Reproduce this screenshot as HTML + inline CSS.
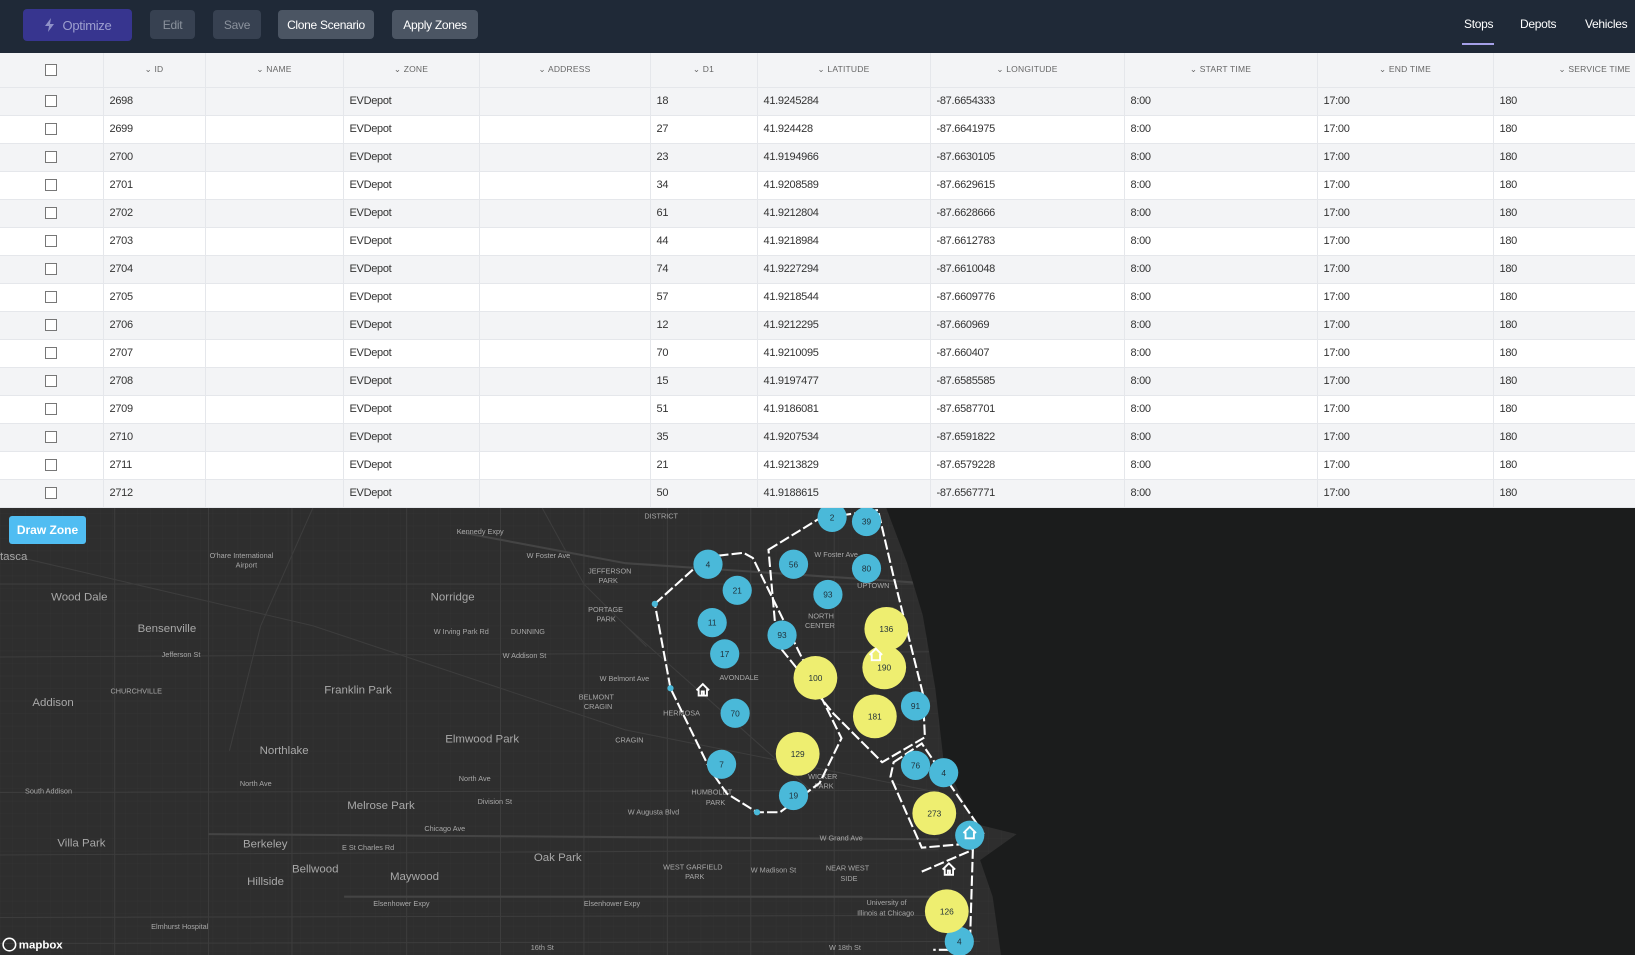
<!DOCTYPE html>
<html><head><meta charset="utf-8"><style>
*{box-sizing:border-box;margin:0;padding:0}
body{width:1635px;height:955px;overflow:hidden;font-family:"Liberation Sans",sans-serif;background:#fff;position:relative}
.hdr{position:absolute;left:0;top:0;width:1635px;height:53px;background:#1f2937}
.btn{position:absolute;top:10px;height:29px;border-radius:4px;font-size:12px;display:flex;align-items:center;justify-content:center;letter-spacing:-.3px}
.tab{position:absolute;top:17px;font-size:12px;color:#fff;letter-spacing:-.3px}
table{position:absolute;left:0;top:53px;border-collapse:collapse;table-layout:fixed;width:1635px}
td,th{height:28px;border-right:1px solid #e5e7eb;border-bottom:1px solid #e5e7eb;font-size:11px;color:#333;padding-left:6px;text-align:left;white-space:nowrap;overflow:hidden;letter-spacing:-.3px}
th{height:34px;background:#f3f4f6;font-weight:normal;font-size:8.5px;color:#666;text-align:center;letter-spacing:.2px;padding-left:0}
tr:nth-child(even) td{background:#f3f4f6}
td.c,th.c{text-align:center;padding:0}
.cb{display:inline-block;width:12px;height:12px;border:1px solid #777;background:#fff;vertical-align:middle}
.map{position:absolute;left:0;top:508px;width:1635px;height:447px;background:#2e2e2e;overflow:hidden}
.dz{position:absolute;left:9px;top:8px;width:77px;height:28px;background:#50bdf2;border-radius:3px;color:#fff;font-size:12px;font-weight:bold;display:flex;align-items:center;justify-content:center}
</style></head><body>
<div class="hdr">
<div class="btn" style="left:23px;width:109px;height:32px;top:9px;background:#37358f;color:#9d9fcf;font-size:13px">
<svg width="12" height="14" viewBox="0 0 12 14" style="margin-right:7px"><path d="M7 0L1 8h4l-1 6 6-8H6z" fill="#8f91c8"/></svg>Optimize</div>
<div class="btn" style="left:150px;width:45px;background:#374151;color:#8b929d">Edit</div>
<div class="btn" style="left:213px;width:48px;background:#374151;color:#8b929d">Save</div>
<div class="btn" style="left:278px;width:96px;background:#4b5563;color:#fff">Clone Scenario</div>
<div class="btn" style="left:392px;width:86px;background:#4b5563;color:#fff">Apply Zones</div>
<div class="tab" style="left:1464px">Stops</div>
<div style="position:absolute;left:1462px;top:43px;width:32px;height:2px;background:#a5a0e8"></div>
<div class="tab" style="left:1520px">Depots</div>
<div class="tab" style="left:1585px">Vehicles</div>
</div>
<table>
<colgroup><col style="width:103px"><col style="width:102px"><col style="width:138px"><col style="width:136px"><col style="width:171px"><col style="width:107px"><col style="width:173px"><col style="width:194px"><col style="width:193px"><col style="width:176px"><col style="width:142px"></colgroup>
<tr><th class="c"><span class="cb"></span></th><th>⌄ ID</th><th>⌄ NAME</th><th>⌄ ZONE</th><th>⌄ ADDRESS</th><th>⌄ D1</th><th>⌄ LATITUDE</th><th>⌄ LONGITUDE</th><th>⌄ START TIME</th><th>⌄ END TIME</th><th style="text-align:right;padding-right:4px">⌄ SERVICE TIME</th></tr>
<tr><td class="c"><span class="cb"></span></td><td>2698</td><td></td><td>EVDepot</td><td></td><td>18</td><td>41.9245284</td><td>-87.6654333</td><td>8:00</td><td>17:00</td><td>180</td></tr>
<tr><td class="c"><span class="cb"></span></td><td>2699</td><td></td><td>EVDepot</td><td></td><td>27</td><td>41.924428</td><td>-87.6641975</td><td>8:00</td><td>17:00</td><td>180</td></tr>
<tr><td class="c"><span class="cb"></span></td><td>2700</td><td></td><td>EVDepot</td><td></td><td>23</td><td>41.9194966</td><td>-87.6630105</td><td>8:00</td><td>17:00</td><td>180</td></tr>
<tr><td class="c"><span class="cb"></span></td><td>2701</td><td></td><td>EVDepot</td><td></td><td>34</td><td>41.9208589</td><td>-87.6629615</td><td>8:00</td><td>17:00</td><td>180</td></tr>
<tr><td class="c"><span class="cb"></span></td><td>2702</td><td></td><td>EVDepot</td><td></td><td>61</td><td>41.9212804</td><td>-87.6628666</td><td>8:00</td><td>17:00</td><td>180</td></tr>
<tr><td class="c"><span class="cb"></span></td><td>2703</td><td></td><td>EVDepot</td><td></td><td>44</td><td>41.9218984</td><td>-87.6612783</td><td>8:00</td><td>17:00</td><td>180</td></tr>
<tr><td class="c"><span class="cb"></span></td><td>2704</td><td></td><td>EVDepot</td><td></td><td>74</td><td>41.9227294</td><td>-87.6610048</td><td>8:00</td><td>17:00</td><td>180</td></tr>
<tr><td class="c"><span class="cb"></span></td><td>2705</td><td></td><td>EVDepot</td><td></td><td>57</td><td>41.9218544</td><td>-87.6609776</td><td>8:00</td><td>17:00</td><td>180</td></tr>
<tr><td class="c"><span class="cb"></span></td><td>2706</td><td></td><td>EVDepot</td><td></td><td>12</td><td>41.9212295</td><td>-87.660969</td><td>8:00</td><td>17:00</td><td>180</td></tr>
<tr><td class="c"><span class="cb"></span></td><td>2707</td><td></td><td>EVDepot</td><td></td><td>70</td><td>41.9210095</td><td>-87.660407</td><td>8:00</td><td>17:00</td><td>180</td></tr>
<tr><td class="c"><span class="cb"></span></td><td>2708</td><td></td><td>EVDepot</td><td></td><td>15</td><td>41.9197477</td><td>-87.6585585</td><td>8:00</td><td>17:00</td><td>180</td></tr>
<tr><td class="c"><span class="cb"></span></td><td>2709</td><td></td><td>EVDepot</td><td></td><td>51</td><td>41.9186081</td><td>-87.6587701</td><td>8:00</td><td>17:00</td><td>180</td></tr>
<tr><td class="c"><span class="cb"></span></td><td>2710</td><td></td><td>EVDepot</td><td></td><td>35</td><td>41.9207534</td><td>-87.6591822</td><td>8:00</td><td>17:00</td><td>180</td></tr>
<tr><td class="c"><span class="cb"></span></td><td>2711</td><td></td><td>EVDepot</td><td></td><td>21</td><td>41.9213829</td><td>-87.6579228</td><td>8:00</td><td>17:00</td><td>180</td></tr>
<tr><td class="c"><span class="cb"></span></td><td>2712</td><td></td><td>EVDepot</td><td></td><td>50</td><td>41.9188615</td><td>-87.6567771</td><td>8:00</td><td>17:00</td><td>180</td></tr>
</table>
<div class="map">
<svg width="1635" height="447" viewBox="0 487 1568 429" preserveAspectRatio="none" style="position:absolute;left:0;top:0">
<defs><pattern id="g" width="12" height="12" patternUnits="userSpaceOnUse"><path d="M12 0H0V12" fill="none" stroke="#353535" stroke-width=".6"/></pattern></defs>
<rect x="0" y="487" width="1000" height="429" fill="url(#g)"/>
<g stroke="#3d3d3d" stroke-width="1" fill="none">
<path d="M0 560 L1568 560 M0 630 L900 625 M0 760 L900 758 M0 820 L900 815 M0 880 L900 878 M0 905 L940 903"/>
<path d="M110 487V916 M200 487V916 M280 487V916 M390 487V916 M480 487V916 M560 487V916 M640 487V916 M720 487V916 M800 487V916"/>
<path d="M0 530 L300 600 L600 700 L900 760 M300 487 L250 600 L220 720 M520 487 L560 560 L620 620 M600 600 L780 760"/>
</g>
<g stroke="#444" stroke-width="2" fill="none"><path d="M330 860 L900 860 M440 510 L600 540 L900 560 M200 800 L900 805"/></g>
<path d="M850 487 L1568 487 L1568 916 L960 916 L952 860 L940 825 L975 800 L935 790 L905 730 L897 660 L885 590 L870 540 Z" fill="#1b1c1c"/>
<g fill="#a8a8a8" font-family="Liberation Sans,sans-serif">
<g font-size="11"><text x="49" y="576">Wood Dale</text><text x="132" y="606">Bensenville</text><text x="31" y="677">Addison</text><text x="311" y="665">Franklin Park</text><text x="413" y="576">Norridge</text><text x="249" y="723">Northlake</text><text x="427" y="712">Elmwood Park</text><text x="333" y="776">Melrose Park</text><text x="55" y="812">Villa Park</text><text x="233" y="813">Berkeley</text><text x="280" y="837">Bellwood</text><text x="237" y="849">Hillside</text><text x="374" y="844">Maywood</text><text x="512" y="826">Oak Park</text><text x="0" y="537">tasca</text></g>
<g font-size="7"><text x="201" y="535">O'hare International</text><text x="226" y="544">Airport</text><text x="155" y="630">Jefferson St</text><text x="106" y="665">CHURCHVILLE</text><text x="24" y="761">South Addison</text><text x="230" y="754">North Ave</text><text x="440" y="749">North Ave</text><text x="416" y="608">W Irving Park Rd</text><text x="490" y="608">DUNNING</text><text x="482" y="631">W Addison St</text><text x="505" y="535">W Foster Ave</text><text x="564" y="550">JEFFERSON</text><text x="574" y="559">PARK</text><text x="564" y="587">PORTAGE</text><text x="572" y="596">PARK</text><text x="575" y="653">W Belmont Ave</text><text x="555" y="671">BELMONT</text><text x="560" y="680">CRAGIN</text><text x="590" y="712">CRAGIN</text><text x="636" y="686">HERMOSA</text><text x="690" y="652">AVONDALE</text><text x="775" y="593">NORTH</text><text x="772" y="602">CENTER</text><text x="781" y="534">W Foster Ave</text><text x="822" y="564">UPTOWN</text><text x="663" y="762">HUMBOLDT</text><text x="677" y="772">PARK</text><text x="775" y="747">WICKER</text><text x="781" y="756">PARK</text><text x="602" y="781">W Augusta Blvd</text><text x="786" y="806">W Grand Ave</text><text x="636" y="834">WEST GARFIELD</text><text x="657" y="843">PARK</text><text x="720" y="837">W Madison St</text><text x="792" y="835">NEAR WEST</text><text x="806" y="845">SIDE</text><text x="831" y="868">University of</text><text x="822" y="878">Illinois at Chicago</text><text x="458" y="771">Division St</text><text x="407" y="797">Chicago Ave</text><text x="328" y="815">E St Charles Rd</text><text x="358" y="869">Elsenhower Expy</text><text x="560" y="869">Elsenhower Expy</text><text x="145" y="891">Elmhurst Hospital</text><text x="509" y="911">16th St</text><text x="795" y="911">W 18th St</text><text x="438" y="512">Kennedy Expy</text><text x="618" y="497">DISTRICT</text></g>
</g>
<g fill="none" stroke="#fff" stroke-width="2" stroke-dasharray="10 3">
<path d="M628 579 L678 534 L713 530 L722 535 L807 708 L786 751 L748 779 L726 779 L697 761 L681 738 L643 660 Z"/>
<path d="M737 527 L786 497 L842 489 L857 553 L885 665 L887 707 L846 731 L799 684 L745 617 Z"/>
<path d="M857 731 L884 713 L943 799 L930 809 L884 813 L854 745 Z"/>
<path d="M884 836 L933 815 L930 911 L895 911"/>
</g>
<g fill="#4ab9d9"><circle cx="628" cy="579" r="3"/><circle cx="643" cy="660" r="3"/><circle cx="726" cy="779" r="3"/></g>
<g font-family="Liberation Sans,sans-serif" font-size="8" text-anchor="middle" fill="#1f2f38">
<g fill="#4ab9d9"><circle cx="798" cy="496" r="14"/><circle cx="831" cy="500" r="14"/><circle cx="679" cy="541" r="14"/><circle cx="761" cy="541" r="14"/><circle cx="831" cy="545" r="14"/><circle cx="707" cy="566" r="14"/><circle cx="794" cy="570" r="14"/><circle cx="683" cy="597" r="14"/><circle cx="750" cy="609" r="14"/><circle cx="695" cy="627" r="14"/><circle cx="705" cy="684" r="14"/><circle cx="878" cy="677" r="14"/><circle cx="692" cy="733" r="14"/><circle cx="761" cy="763" r="14"/><circle cx="878" cy="734" r="14"/><circle cx="905" cy="741" r="14"/><circle cx="930" cy="801" r="14"/><circle cx="920" cy="903" r="14"/></g>
<g fill="#eeee70"><circle cx="850" cy="603" r="21"/><circle cx="848" cy="640" r="21"/><circle cx="782" cy="650" r="21"/><circle cx="839" cy="687" r="21"/><circle cx="765" cy="723" r="21"/><circle cx="896" cy="780" r="21"/><circle cx="908" cy="874" r="21"/></g>
<text x="798" y="499">2</text><text x="831" y="503">39</text><text x="679" y="544">4</text><text x="761" y="544">56</text><text x="831" y="548">80</text><text x="707" y="569">21</text><text x="794" y="573">93</text><text x="683" y="600">11</text><text x="750" y="612">93</text><text x="695" y="630">17</text><text x="705" y="687">70</text><text x="878" y="680">91</text><text x="692" y="736">7</text><text x="761" y="766">19</text><text x="878" y="737">76</text><text x="905" y="744">4</text><text x="920" y="906">4</text>
<text x="850" y="606">136</text><text x="848" y="643">190</text><text x="782" y="653">100</text><text x="839" y="690">181</text><text x="765" y="726">129</text><text x="896" y="783">273</text><text x="908" y="877">126</text>
</g>
<g fill="none" stroke="#fff" stroke-width="1.8">
<path d="M668 662 L674 656 L680 662 M670 661 V667 H678 V661 M673 667 V663 H675 V667"/>
<path d="M834 628 L840 622 L846 628 M836 627 V633 H844 V627"/>
<path d="M924 799 L930 793 L936 799 M926 798 V804 H934 V798"/>
<path d="M904 834 L910 828 L916 834 M906 833 V839 H914 V833 M909 839 V835 H911 V839"/>
</g>
<circle cx="9" cy="906" r="6" fill="none" stroke="#fff" stroke-width="1.5"/>
<text x="18" y="910" font-family="Liberation Sans,sans-serif" font-size="11" fill="#fff" font-weight="bold">mapbox</text>
</svg>
<div class="dz">Draw Zone</div>
</div>
</body></html>
